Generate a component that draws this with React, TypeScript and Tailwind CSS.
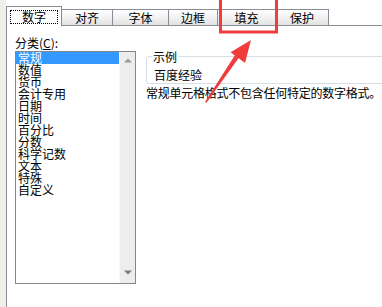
import React from "react";

const items = ["常规", "数值", "货币", "会计专用", "日期", "时间", "百分比", "分数", "科学记数", "文本", "特殊", "自定义"];

const tabs: { label: string; w: string }[] = [
  { label: "对齐", w: "w-[51px]" },
  { label: "字体", w: "w-[56px]" },
  { label: "边框", w: "w-[49px]" },
  { label: "填充", w: "w-[58px]" },
  { label: "保护", w: "w-[53px]" },
];

export default function App() {
  return (
    <div
      className="relative w-[382px] h-[307px] overflow-hidden bg-white flex flex-row text-[12px] leading-[12px] text-black"
      style={{ fontFamily: '"Noto Sans CJK SC", "Noto Sans", sans-serif' }}
    >
      <div className="w-[6px] h-full bg-[#f0efea] shrink-0" />
      <div className="flex-1 flex flex-col min-w-0">
        <div className="h-[6px] shrink-0 bg-white" />
        <div className="flex-1 flex flex-col border-l border-[#898c95]">
          {/* tab row */}
          <div className="h-[20px] flex flex-row items-end shrink-0">
            <div className="w-[55px] h-[20px] border-t border-r border-[#898c95] bg-white pl-[3px] pt-[3px] shrink-0">
              <div className="w-[48px] h-[14px] border border-dotted border-black flex items-center justify-center">
                数字
              </div>
            </div>
            {tabs.map((t) => (
              <div
                key={t.label}
                className={`${t.w} h-[17px] shrink-0 border-t border-r border-b border-[#898c95] bg-linear-to-b from-white via-[#f2f2f2] to-[#e2e2e2] flex items-center justify-center pt-[1px]`}
              >
                {t.label}
              </div>
            ))}
            <div className="flex-1 h-[17px] border-b border-[#898c95]" />
          </div>
          {/* body */}
          <div className="flex-1 flex flex-row pl-[8px] pt-[11px]">
            <div className="flex flex-col shrink-0">
              <div className="h-[12px] mb-[2px] whitespace-nowrap">
                分类(<span className="underline">C</span>):
              </div>
              <div className="w-[121px] h-[233px] border border-[#828790] flex flex-row bg-white">
                <div className="flex-1 flex flex-col pt-0">
                  {items.map((it, i) => (
                    <div
                      key={it}
                      className={`h-[12px] pl-[2px] whitespace-nowrap ${i === 0 ? "bg-[#3399ff] text-white" : ""}`}
                    >
                      {it}
                    </div>
                  ))}
                </div>
                <div className="w-[16px] h-full bg-[#ededed] border-l border-[#f8f8f8] flex flex-col justify-between items-center py-[6px]">
                  <svg width="8" height="5" viewBox="0 0 8 5">
                    <path d="M0 4.5 L4 0.5 L8 4.5 Z" fill="#9a9a9a" />
                  </svg>
                  <svg width="8" height="5" viewBox="0 0 8 5" className="mb-[2px]">
                    <path d="M0 0.5 L8 0.5 L4 4.5 Z" fill="#7a7a7a" />
                  </svg>
                </div>
              </div>
            </div>
            <div className="flex-1 flex flex-col ml-[10px] pt-[19px] min-w-0">
              <div className="relative w-[260px] h-[28px] border border-[#d5dfe5] rounded-[3px] pl-[7px] pt-[12px] whitespace-nowrap">
                <span className="absolute left-[5px] top-[-6px] bg-white px-[1px]">示例</span>
                百度经验
              </div>
              <div className="mt-[3px] whitespace-nowrap tracking-[-0.25px]">常规单元格格式不包含任何特定的数字格式。</div>
            </div>
          </div>
        </div>
      </div>
      {/* annotation overlay */}
      <svg className="absolute left-0 top-0 pointer-events-none" width="382" height="307" viewBox="0 0 382 307">
        <rect x="220.5" y="-3" width="56" height="35" fill="none" stroke="#ef3d3d" strokeWidth="3" />
        <path d="M205 102 L206.5 102.8 L240.5 55.5 L236.5 52.8 Z" fill="#ef3d3d" />
        <path d="M251 40 L230.6 52.2 L245 63 Z" fill="#ef3d3d" />
      </svg>
    </div>
  );
}
